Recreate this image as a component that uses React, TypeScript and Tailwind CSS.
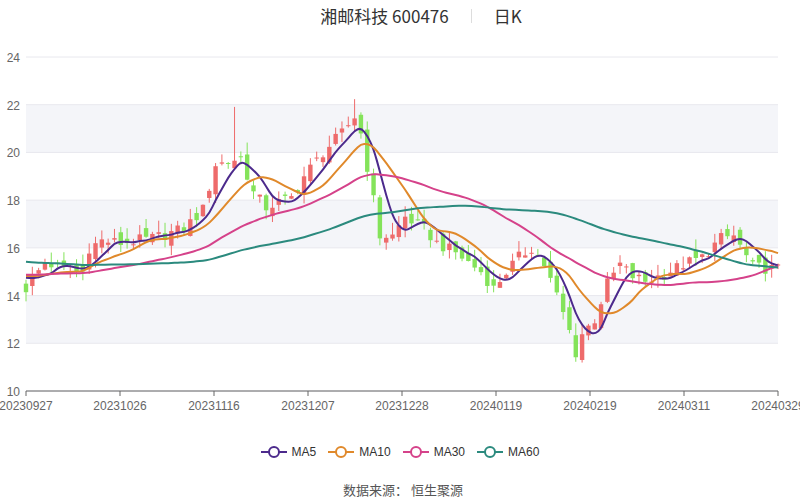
import React from "react";

const keys: [number, number][] = [[0,14.3],[3,15.4],[7,15.0],[9,15.0],[10,16],[12,16.3],[15,16.2],[20,16.4],[25,16.8],[28,17.6],[30,19.5],[32,19.6],[34,19.8],[36,18.3],[38,17.7],[42,18.1],[44,19.0],[47,20.0],[50,20.8],[52,21.5],[53,20.8],[55,18.0],[56,16.5],[58,16.5],[60,17.3],[63,16.8],[65,16.2],[68,15.8],[72,15.0],[74,14.3],[76,15.0],[78,15.6],[80,16.0],[82,15.3],[84,14.0],[86,12.5],[87,11.6],[88,12.4],[90,13.0],[92,14.5],[94,15.3],[96,14.8],[98,14.6],[101,14.9],[104,15.3],[107,15.6],[110,16.4],[112,16.5],[115,15.2],[119,15.1]];
const N = 120;
function rnd(i: number) { const s = Math.sin(i * 12.9898 + 78.233) * 43758.5453; return s - Math.floor(s); }
const closes: number[] = [];
for (let i = 0; i < N; i++) {
  let k = 0; while (k < keys.length - 1 && keys[k + 1][0] < i) k++;
  const [a, pa] = keys[k]; const [b, pb] = keys[Math.min(k + 1, keys.length - 1)];
  const t = b === a ? 0 : (i - a) / (b - a);
  closes.push(pa + (pb - pa) * t + (rnd(i) - 0.5) * 0.5);
}
const candles = closes.map((c, i) => {
  const o = i === 0 ? 14.5 : closes[i - 1] + (rnd(i + 300) - 0.5) * 0.6;
  const hi = Math.max(o, c) + rnd(i + 500) * 0.5 + (i === 33 ? 1.8 : 0) + (i === 52 ? 0.7 : 0);
  const lo = Math.min(o, c) - rnd(i + 700) * 0.4;
  return { o, c, hi, lo };
});
const pre = [...Array(30).fill(16.0), ...Array(30).fill(14.9)];
const all = [...pre, ...closes];
function ma(n: number) { return closes.map((_, i) => { const e = i + 60; let s = 0; for (let j = e - n + 1; j <= e; j++) s += all[j]; return s / n; }); }
const X0 = 26, X1 = 778;
const xs = (i: number) => X0 + (i * (X1 - X0)) / (N - 1);
const ys = (v: number) => 391 - ((v - 10) / 14) * 334;
function smooth(vals: number[]) {
  const p = vals.map((v, i) => [xs(i), ys(v)]);
  let d = `M${p[0][0]},${p[0][1]}`;
  for (let i = 1; i < p.length - 1; i++) {
    const mx = (p[i][0] + p[i + 1][0]) / 2, my = (p[i][1] + p[i + 1][1]) / 2;
    d += ` Q${p[i][0]},${p[i][1]} ${mx},${my}`;
  }
  d += ` L${p[p.length - 1][0]},${p[p.length - 1][1]}`;
  return d;
}
const lines = [
  { name: "MA5", n: 5, color: "#4c2a8c" },
  { name: "MA10", n: 10, color: "#e0892b" },
  { name: "MA30", n: 30, color: "#d5428a" },
  { name: "MA60", n: 60, color: "#2b8a7e" },
];
const xt = ["20230927", "20231026", "20231116", "20231207", "20231228", "20240119", "20240219", "20240311", "20240329"];

export default function App() {
  return (
    <div className="w-[800px] h-[500px] bg-white relative" style={{ fontFamily: "'Noto Sans CJK SC', 'Liberation Sans', sans-serif" }}>
      <div className="absolute top-[3px] left-0 w-full flex justify-center items-center text-[17px] text-[#333]">
        <span className="ml-[42px]">湘邮科技 600476</span>
        <span className="mx-[22px] w-px h-[14px] bg-[#ddd]" />
        <span>日K</span>
      </div>
      <svg width="800" height="430" className="absolute top-0 left-0">
        {[0, 1, 2, 3, 4, 5, 6].map((k) => (
          k % 2 === 1 ? <rect key={k} x={X0} y={ys(10 + 2 * k + 2)} width={X1 - X0} height={ys(10) - ys(12)} fill="#f4f5f9" /> : null
        ))}
        {[10, 12, 14, 16, 18, 20, 22, 24].map((v) => (
          <g key={v}>
            <line x1={X0} x2={X1} y1={ys(v)} y2={ys(v)} stroke="#e8e8ee" />
            <text x={20} y={ys(v) + 5} textAnchor="end" fontSize="12" fill="#666" fontFamily="Liberation Sans, sans-serif">{v}</text>
          </g>
        ))}
        <line x1={X0} x2={X1} y1={391} y2={391} stroke="#666" />
        {xt.map((t, i) => {
          const x = X0 + (i * (X1 - X0)) / 8;
          return (
            <g key={t}>
              <line x1={x} x2={x} y1={391} y2={396} stroke="#666" />
              <text x={x} y={410} textAnchor="middle" fontSize="12" fill="#666" fontFamily="Liberation Sans, sans-serif">{t}</text>
            </g>
          );
        })}
        {candles.map((c, i) => {
          const up = c.c >= c.o; const col = up ? "#ee6b6b" : "#84e35a";
          const x = xs(i); const top = ys(Math.max(c.o, c.c)); const h = Math.max(1, ys(Math.min(c.o, c.c)) - top);
          return (
            <g key={i}>
              <line x1={x} x2={x} y1={ys(c.hi)} y2={ys(c.lo)} stroke={col} />
              <rect x={x - 2.2} y={top} width={4.4} height={h} fill={col} />
            </g>
          );
        })}
        {lines.map((l) => (
          <path key={l.name} d={smooth(ma(l.n))} fill="none" stroke={l.color} strokeWidth="2" />
        ))}
      </svg>
      <div className="absolute top-[443px] left-0 w-full flex justify-center gap-[12px] text-[12px] text-[#333]" style={{ fontFamily: "'Liberation Sans', sans-serif" }}>
        {lines.map((l) => (
          <div key={l.name} className="flex items-center gap-[5px]">
            <svg width="26" height="14"><line x1="0" x2="26" y1="7" y2="7" stroke={l.color} strokeWidth="2" /><circle cx="13" cy="7" r="5" fill="white" stroke={l.color} strokeWidth="2" /></svg>
            <span>{l.name}</span>
          </div>
        ))}
      </div>
      <div className="absolute top-[480px] left-0 w-full flex justify-center text-[13px] text-[#555]">
        <span className="ml-[6px]">数据来源：&nbsp;恒生聚源</span>
      </div>
    </div>
  );
}
